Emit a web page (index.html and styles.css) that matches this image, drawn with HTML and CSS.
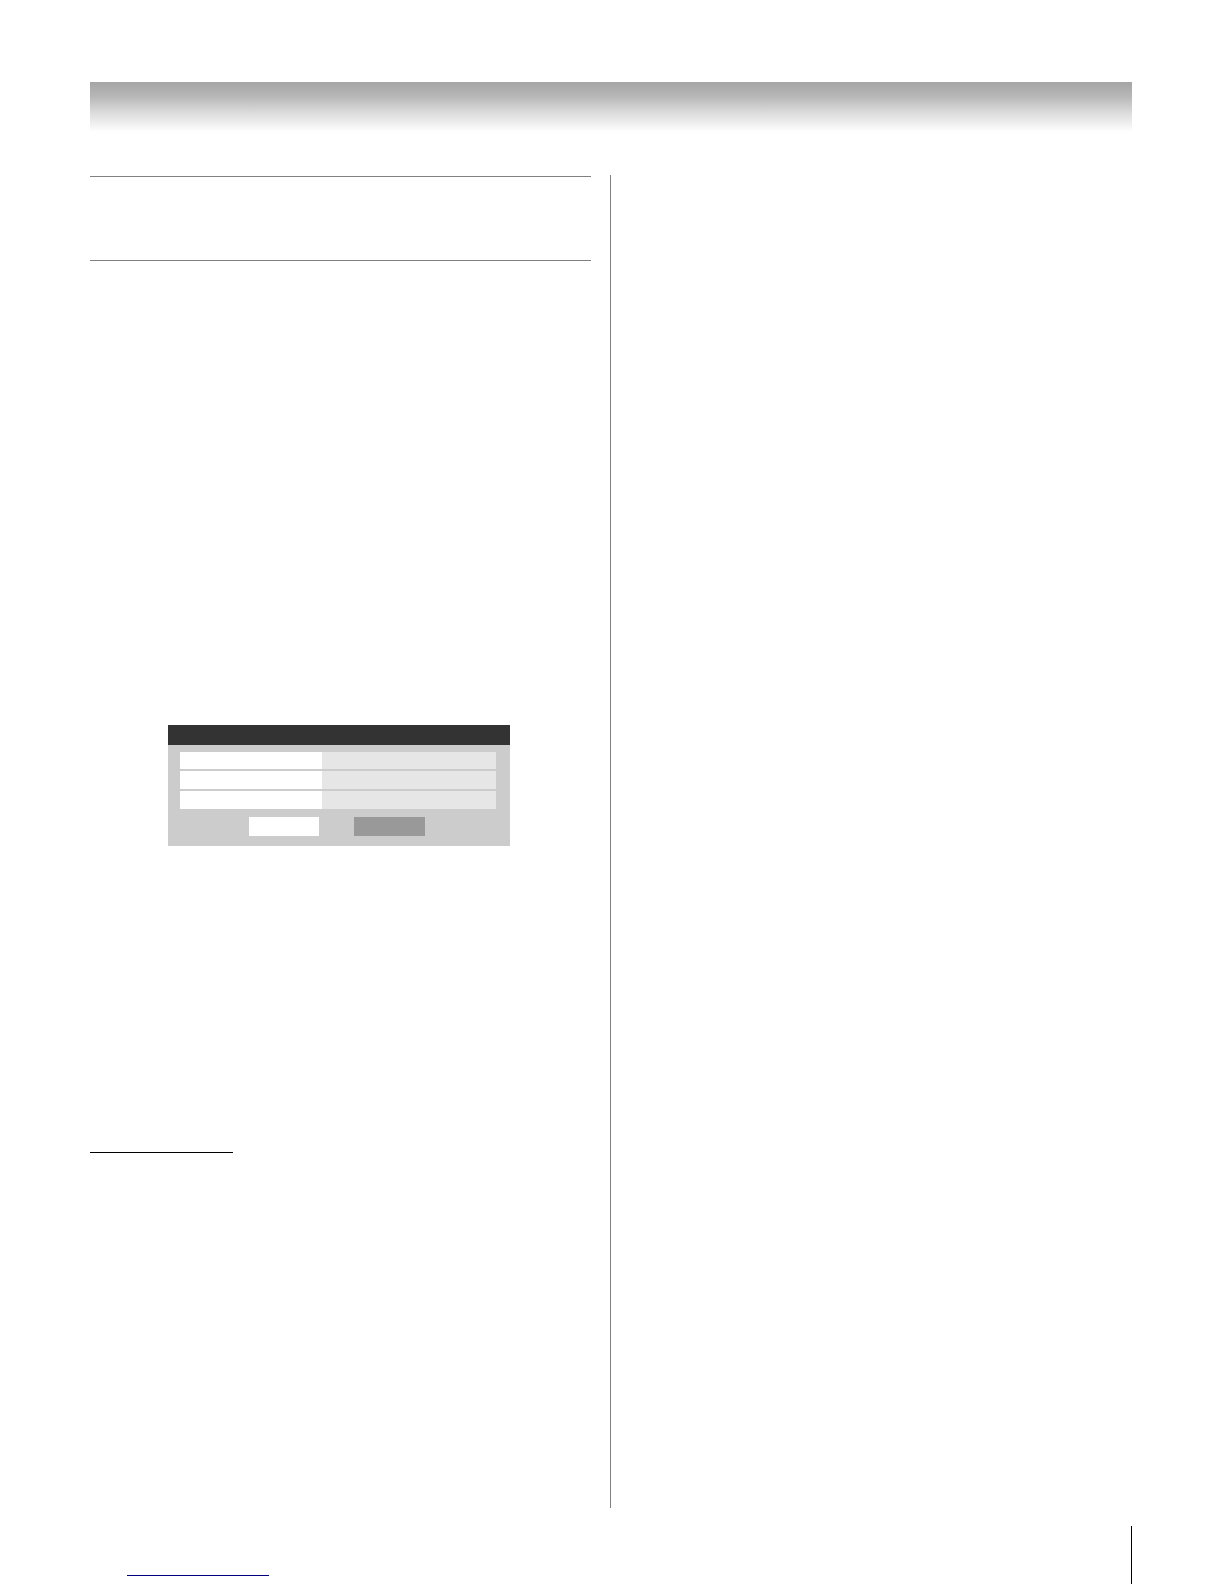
FILE: index.html
```html
<!DOCTYPE html>
<html lang="en">
<head>
<meta charset="utf-8">
<meta name="viewport" content="width=device-width, initial-scale=1">
<title></title>
<link rel="stylesheet" href="styles.css">
</head>
<body>
<div class="page">
  <header class="banner"></header>
  <main class="columns">
    <section class="column">
      <div class="heading"></div>
      <div class="dialog">
        <div class="dialog-title"></div>
        <div class="dialog-body">
          <table class="settings">
            <tr><td class="name"></td><td></td></tr>
            <tr><td class="name"></td><td></td></tr>
            <tr><td class="name"></td><td></td></tr>
          </table>
          <div class="actions">
            <button class="button" type="button"></button>
            <button class="button button-selected" type="button"></button>
          </div>
        </div>
      </div>
      <hr class="note-rule">
    </section>
    <section class="column column-right"></section>
  </main>
  <footer class="footer">
    <a class="footer-link" href="#"></a>
  </footer>
</div>
</body>
</html>
```
FILE: styles.css
```css
* {
  box-sizing: border-box;
}

body {
  margin: 0;
  background: #fff;
  font-family: "Liberation Sans", Arial, sans-serif;
}

.page {
  display: flex;
  flex-direction: column;
  min-height: 100vh;
  padding: 82px 92px 0 90px;
}

.banner {
  height: 50px;
  background: linear-gradient(#a5a5a5, #b8b8b8 30%, #dadada 60%, #fff);
}

.columns {
  flex: 1;
  display: grid;
  grid-template-columns: 520fr 522fr;
  margin: 43px 0 18px;
}

.column {
  padding: 1px 19px 0 0;
}

.column-right {
  border-left: 1px solid #808080;
}

.heading {
  height: 85px;
  border: solid #808080;
  border-width: 1px 0;
}

.dialog {
  width: 342px;
  margin: 464px 0 306px 78px;
  background: #ccc;
}

.dialog-title {
  height: 20px;
  background: #333;
}

.dialog-body {
  padding: 5px 14px 10px 12px;
}

.settings {
  width: 100%;
  table-layout: fixed;
  border-spacing: 0 2px;
}

.settings td {
  height: 18px;
  padding: 0;
  background: #e6e6e6;
}

.settings tr:first-child td {
  height: 17px;
}

.settings .name {
  width: 142px;
  background: #fff;
}

.actions {
  display: flex;
  gap: 35px;
  padding: 6px 0 0 69px;
}

.button {
  width: 70px;
  height: 19px;
  padding: 0;
  border: 0;
  background: #fff;
}

.button-selected {
  width: 71px;
  background: #999;
}

.note-rule {
  width: 143px;
  height: 1px;
  margin: 0;
  border: 0;
  background: #000;
}

.footer {
  display: flex;
  align-items: flex-start;
  height: 58px;
  padding-left: 37px;
  border-right: 1px solid #000;
}

.footer-link {
  width: 142px;
  height: 50px;
  border-bottom: 1px solid #000080;
}
```
